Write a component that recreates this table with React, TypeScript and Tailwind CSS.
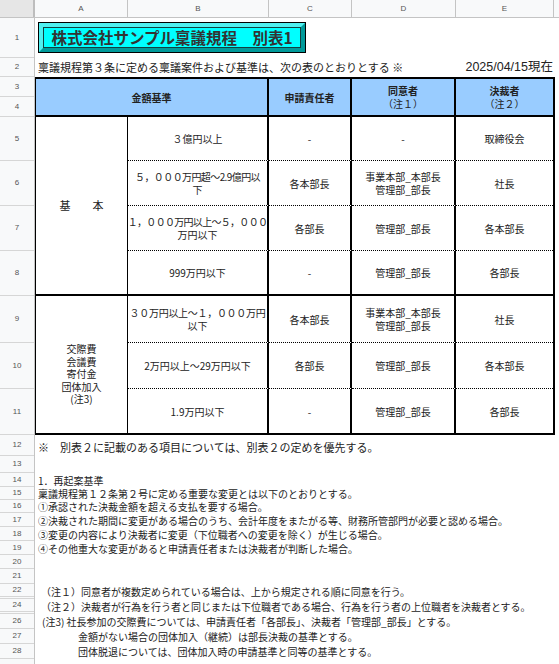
import React from "react";

const rowHeads: { label: string; h: string; extra?: string }[] = [
  { label: "1", h: "h-[40px]" },
  { label: "2", h: "h-[19px]" },
  { label: "3", h: "h-[20px]" },
  { label: "4", h: "h-[20px]" },
  { label: "5", h: "h-[44px]" },
  { label: "6", h: "h-[45px]" },
  { label: "7", h: "h-[45px]" },
  { label: "8", h: "h-[45px]" },
  { label: "9", h: "h-[47px]" },
  { label: "10", h: "h-[46px]" },
  { label: "11", h: "h-[46px]" },
  { label: "12", h: "h-[21px]" },
  { label: "13", h: "h-[17px]" },
  { label: "14", h: "h-[14px]" },
  { label: "15", h: "h-[13px]" },
  { label: "16", h: "h-[13px]" },
  { label: "17", h: "h-[14px]" },
  { label: "18", h: "h-[14px]" },
  { label: "19", h: "h-[14px]" },
  { label: "20", h: "h-[14px]" },
  { label: "21", h: "h-[15px]" },
  { label: "22", h: "h-[15px]", extra: "border-double border-b-[3px]" },
  { label: "24", h: "h-[15px]", extra: "border-double border-b-[3px]" },
  { label: "26", h: "h-[15px]" },
  { label: "27", h: "h-[15px]" },
  { label: "28", h: "h-[15px]" },
  { label: "", h: "h-[15px]" },
];

const cellBase = "flex flex-col items-center justify-center text-center text-[10px] leading-[13px] text-[#222] whitespace-nowrap";
const dotted = "border-b border-black [border-bottom-style:dotted]";

function C({ className, children }: { className?: string; children?: React.ReactNode }) {
  return <div className={`${cellBase} ${className ?? ""}`}>{children}</div>;
}

function Note({ h, className, children }: { h: string; className?: string; children?: React.ReactNode }) {
  return (
    <div className={`${h} flex items-center whitespace-nowrap text-[10px] text-[#222] ${className ?? ""}`}>
      {children}
    </div>
  );
}

export default function App() {
  return (
    <div className="w-[559px] h-[664px] overflow-hidden bg-white font-['Noto_Sans_CJK_JP',sans-serif]">
      {/* column header */}
      <div className="flex h-[18px] bg-[#f8f9fa] border-b border-[#c4c4c4] text-[8px] text-[#555] font-['Liberation_Sans',sans-serif]">
        <div className="w-[35px] shrink-0 bg-[#e6e6e6] border-r-2 border-[#bdbdbd]" />
        <div className="w-[93px] shrink-0 border-r border-[#c4c4c4] flex items-center justify-center">A</div>
        <div className="w-[141px] shrink-0 border-r border-[#c4c4c4] flex items-center justify-center">B</div>
        <div className="w-[83px] shrink-0 border-r border-[#c4c4c4] flex items-center justify-center">C</div>
        <div className="w-[104px] shrink-0 border-r border-[#c4c4c4] flex items-center justify-center">D</div>
        <div className="w-[98px] shrink-0 border-r border-[#c4c4c4] flex items-center justify-center">E</div>
        <div className="flex-1" />
      </div>

      <div className="flex">
        {/* row headers */}
        <div className="w-[35px] shrink-0 bg-[#f8f9fa] border-r border-[#c4c4c4] text-[8px] text-[#555] font-['Liberation_Sans',sans-serif]">
          {rowHeads.map((r, i) => (
            <div
              key={i}
              className={`${r.h} flex items-center justify-center border-b border-[#d6d6d6] ${r.extra ?? ""}`}
            >
              {r.label}
            </div>
          ))}
        </div>

        {/* sheet content */}
        <div className="flex-1">
          {/* row 1: title */}
          <div className="h-[40px] pl-[3px] pt-[4px]">
            <div className="w-[268px] h-[31px] border border-black">
              <div className="w-full h-full border-[4px] border-t-[#4ff0f0] border-l-[#4ff0f0] border-r-[#009a9a] border-b-[#009a9a]">
                <div className="w-full h-full border border-[#104040] bg-[#00ffff] flex items-center justify-center text-[15.5px] font-bold text-[#333] whitespace-nowrap">
                  株式会社サンプル稟議規程　別表1
                </div>
              </div>
            </div>
          </div>

          {/* row 2 */}
          <div className="h-[19px] w-[520px] flex items-center justify-between pl-[3px] pr-[2px] text-[11px] text-[#222] whitespace-nowrap">
            <span>稟議規程第３条に定める稟議案件および基準は、次の表のとおりとする ※</span>
            <span className="font-['Liberation_Sans','Noto_Sans_CJK_JP',sans-serif] text-[12.5px]">2025/04/15現在</span>
          </div>

          {/* table rows 3-11 */}
          <div className="w-[520px] h-[358px] border-t-2 border-r-2 border-b-2 border-l border-black grid grid-cols-[92px_141px_83px_104px_97px] grid-rows-[38px_44px_45px_45px_45px_47px_46px_44px]">
            {/* header */}
            <C className="col-span-2 bg-[#99ccff] border-r-2 border-b-2 border-black font-bold">金額基準</C>
            <C className="bg-[#99ccff] border-r-2 border-b-2 border-black font-bold">申請責任者</C>
            <C className="bg-[#99ccff] border-r-2 border-b-2 border-black">
              <span className="font-bold">同意者</span>
              <span>（注１）</span>
            </C>
            <C className="bg-[#99ccff] border-b-2 border-black">
              <span className="font-bold">決裁者</span>
              <span>（注２）</span>
            </C>

            {/* 基本 group */}
            <C className="row-span-4 border-r border-b-2 border-black text-[11px]">基　　本</C>

            <C className={`border-r-2 border-black ${dotted}`}>３億円以上</C>
            <C className={`border-r-2 border-black ${dotted}`}>-</C>
            <C className={`border-r-2 border-black ${dotted}`}>-</C>
            <C className={`${dotted}`}>取締役会</C>

            <C className={`border-r-2 border-black ${dotted}`}>
              <span className="tracking-[-0.6px]">５，０００万円超～2.9億円以</span>
              <span>下</span>
            </C>
            <C className={`border-r-2 border-black ${dotted}`}>各本部長</C>
            <C className={`border-r-2 border-black ${dotted}`}>
              <span>事業本部_本部長</span>
              <span>管理部_部長</span>
            </C>
            <C className={`${dotted}`}>社長</C>

            <C className={`border-r-2 border-black ${dotted}`}>
              <span className="tracking-[-0.7px]">１，０００万円以上～５，０００</span>
              <span>万円以下</span>
            </C>
            <C className={`border-r-2 border-black ${dotted}`}>各部長</C>
            <C className={`border-r-2 border-black ${dotted}`}>管理部_部長</C>
            <C className={`${dotted}`}>各本部長</C>

            <C className="border-r-2 border-b-2 border-black">999万円以下</C>
            <C className="border-r-2 border-b-2 border-black">-</C>
            <C className="border-r-2 border-b-2 border-black">管理部_部長</C>
            <C className="border-b-2 border-black">各部長</C>

            {/* 交際費 group */}
            <C className="row-span-3 border-r border-black pt-[20px]">
              <p className="leading-[12.5px]">
                交際費<br />会議費<br />寄付金<br />団体加入<br />(注3)
              </p>
            </C>

            <C className={`border-r-2 border-black ${dotted}`}>
              <span className="tracking-[-0.3px]">３０万円以上～１，０００万円</span>
              <span>以下</span>
            </C>
            <C className={`border-r-2 border-black ${dotted}`}>各本部長</C>
            <C className={`border-r-2 border-black ${dotted}`}>
              <span>事業本部_本部長</span>
              <span>管理部_部長</span>
            </C>
            <C className={`${dotted}`}>社長</C>

            <C className={`border-r-2 border-black ${dotted}`}>2万円以上～29万円以下</C>
            <C className={`border-r-2 border-black ${dotted}`}>各部長</C>
            <C className={`border-r-2 border-black ${dotted}`}>管理部_部長</C>
            <C className={`${dotted}`}>各本部長</C>

            <C className="border-r-2 border-black">1.9万円以下</C>
            <C className="border-r-2 border-black">-</C>
            <C className="border-r-2 border-black">管理部_部長</C>
            <C>各部長</C>
          </div>

          {/* row 12 */}
          <div className="h-[21px] flex items-center pl-[3px] pt-[4px] text-[11px] text-[#222] whitespace-nowrap">
            ※　別表２に記載のある項目については、別表２の定めを優先する。
          </div>
          <div className="h-[17px]" />
          <Note h="h-[14px]" className="pl-[3px]">1．再起案基準</Note>
          <Note h="h-[13px]" className="pl-[3px]">稟議規程第１２条第２号に定める重要な変更とは以下のとおりとする。</Note>
          <Note h="h-[13px]" className="pl-[3px]">①承認された決裁金額を超える支払を要する場合。</Note>
          <Note h="h-[14px]" className="pl-[3px]">②決裁された期間に変更がある場合のうち、会計年度をまたがる等、財務所管部門が必要と認める場合。</Note>
          <Note h="h-[14px]" className="pl-[3px]">③変更の内容により決裁者に変更（下位職者への変更を除く）が生じる場合。</Note>
          <Note h="h-[14px]" className="pl-[3px]">④その他重大な変更があると申請責任者または決裁者が判断した場合。</Note>
          <div className="h-[14px]" />
          <div className="h-[15px]" />
          <Note h="h-[15px]" className="pl-[6px]">（注１）同意者が複数定められている場合は、上から規定される順に同意を行う。</Note>
          <Note h="h-[15px]" className="pl-[6px]">（注２）決裁者が行為を行う者と同じまたは下位職者である場合、行為を行う者の上位職者を決裁者とする。</Note>
          <Note h="h-[15px]" className="pl-[7px]">(注3) 社長参加の交際費については、申請責任者「各部長」、決裁者「管理部_部長」とする。</Note>
          <Note h="h-[15px]" className="pl-[43px]">金額がない場合の団体加入（継続）は部長決裁の基準とする。</Note>
          <Note h="h-[15px]" className="pl-[43px]">団体脱退については、団体加入時の申請基準と同等の基準とする。</Note>
          <div className="h-[15px]" />
        </div>
      </div>
    </div>
  );
}
